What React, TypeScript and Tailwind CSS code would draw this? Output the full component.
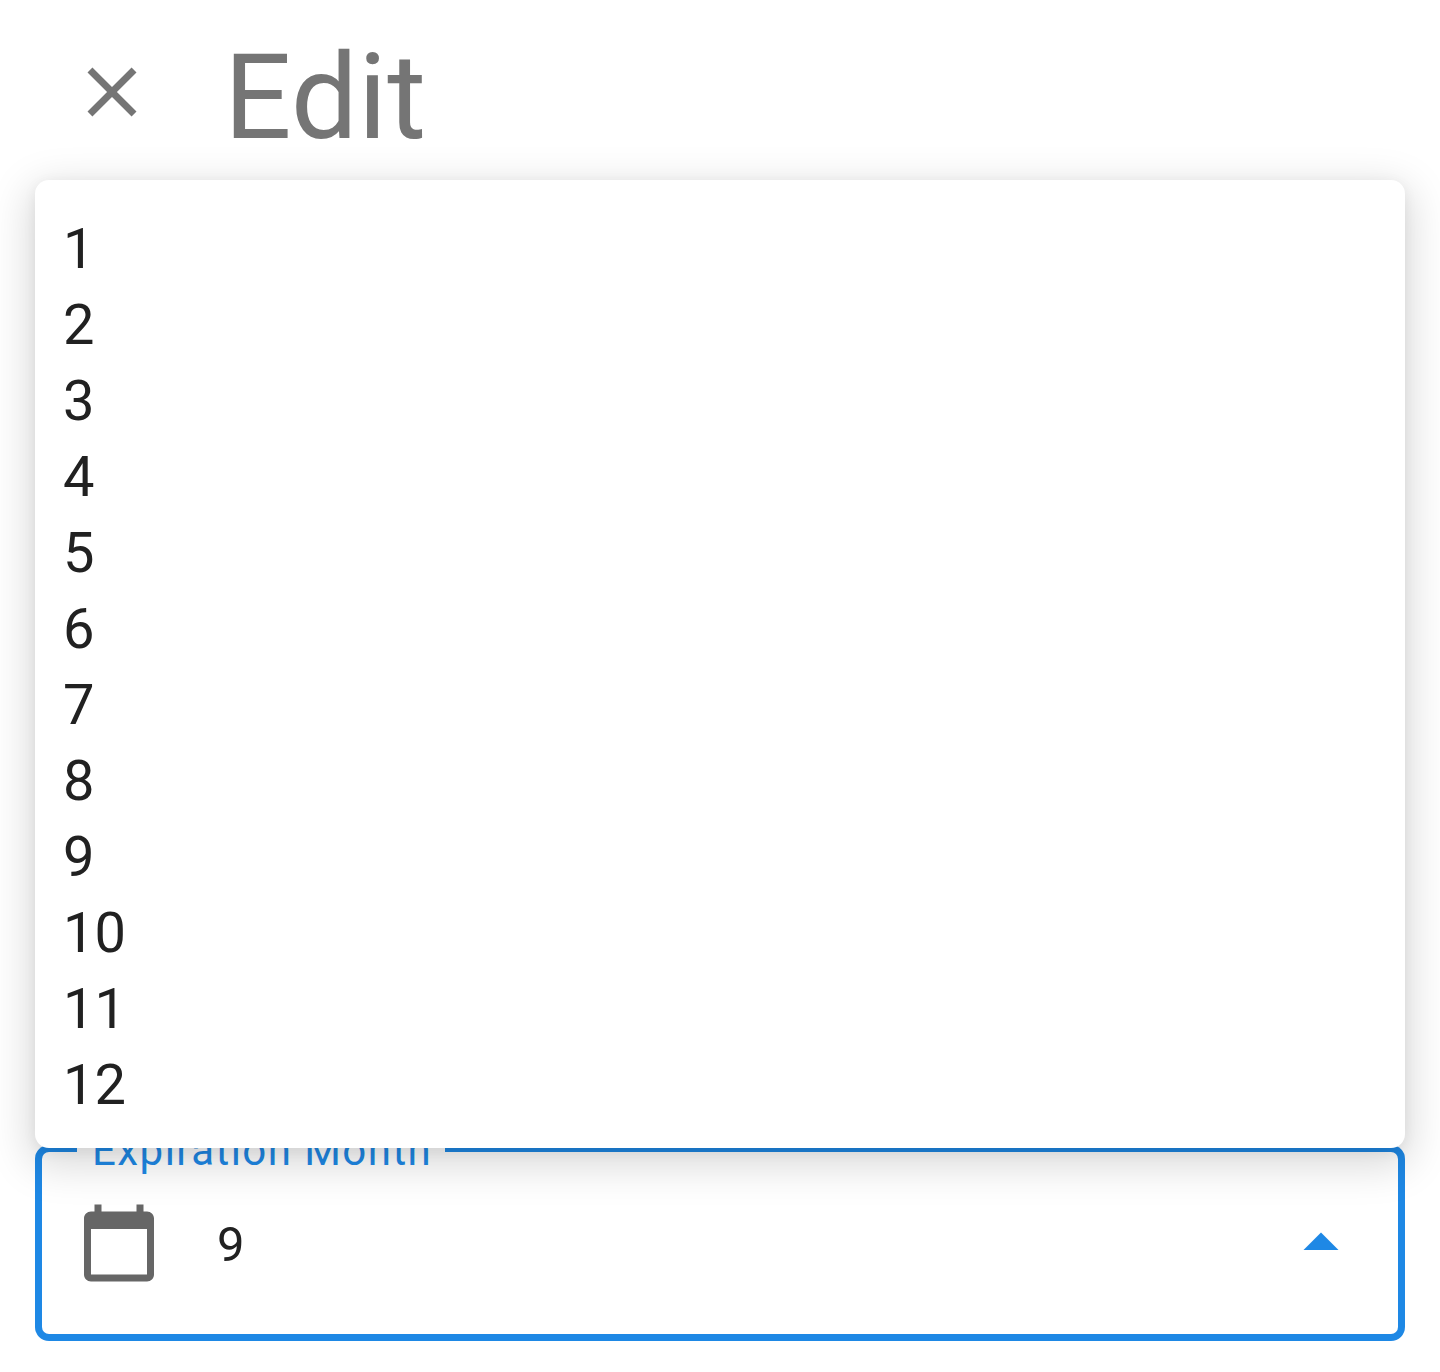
import React from "react";

const months = Array.from({ length: 12 }, (_, i) => i + 1);

function Icon({ d, className }: { d: string; className: string }) {
  return (
    <svg viewBox="0 0 24 24" className={className} fill="currentColor" aria-hidden="true">
      <path d={d} />
    </svg>
  );
}

function Header() {
  return (
    <header className="flex h-[180px] items-start pl-[70px] text-[#757575]">
      <button aria-label="Close" className="mt-[50px] size-[84px]">
        <Icon
          className="size-[84px]"
          d="M19 6.41 17.59 5 12 10.59 6.41 5 5 6.41 10.59 12 5 17.59 6.41 19 12 13.41 17.59 19 19 17.59 13.41 12z"
        />
      </button>
      <h1 className="mt-[28px] ml-[70px] text-[119px] leading-[140px] tracking-[0.2px]">Edit</h1>
    </header>
  );
}

function MonthMenu() {
  return (
    <ul className="relative z-10 rounded-[14px] bg-white py-7 shadow-[0_3.5px_14px_0_rgba(0,0,0,0.06),0_12px_42px_6px_rgba(0,0,0,0.15)]">
      {months.map((m) => (
        <li key={m} className="h-[76px] px-7 pt-[3px] text-[56px] leading-[76px] text-[#212121]">
          {m}
        </li>
      ))}
    </ul>
  );
}

function MonthField() {
  return (
    <div className="relative -mt-[3px] flex h-[196px] items-center pr-[42px] pl-[42px]">
      <div className="pointer-events-none absolute inset-0 flex text-[#1e88e5]">
        <div className="w-[42px] rounded-l-[14px] border-y-[7px] border-l-[7px] border-current" />
        <div className="w-[368px] border-b-[7px] border-current">
          <div className="-mt-[19px] ml-[15px] text-[42px] leading-[50px] tracking-[1.45px] whitespace-nowrap">
            Expiration Month
          </div>
        </div>
        <div className="flex-1 rounded-r-[14px] border-y-[7px] border-r-[7px] border-current" />
      </div>
      <Icon
        className="size-[84px] text-[#666666]"
        d="M20 3h-1V1h-2v2H7V1H5v2H4c-1.100 0-2 .9-2 2v16c0 1.100.9 2 2 2h16c1.100 0 2-.9 2-2V5c0-1.100-.9-2-2-2zm0 18H4V8h16v13z"
      />
      <span className="mt-1 ml-14 flex-1 text-[49px] leading-[60px] text-[#212121]">{9}</span>
      <Icon className="size-[84px] text-[#1e88e5]" d="M7 14l5-5 5 5z" />
    </div>
  );
}

export default function App() {
  return (
    <div className="h-[1372px] w-[1440px] overflow-hidden bg-white font-['Roboto',sans-serif]">
      <Header />
      <main className="px-[35px]">
        <MonthMenu />
        <MonthField />
      </main>
    </div>
  );
}
